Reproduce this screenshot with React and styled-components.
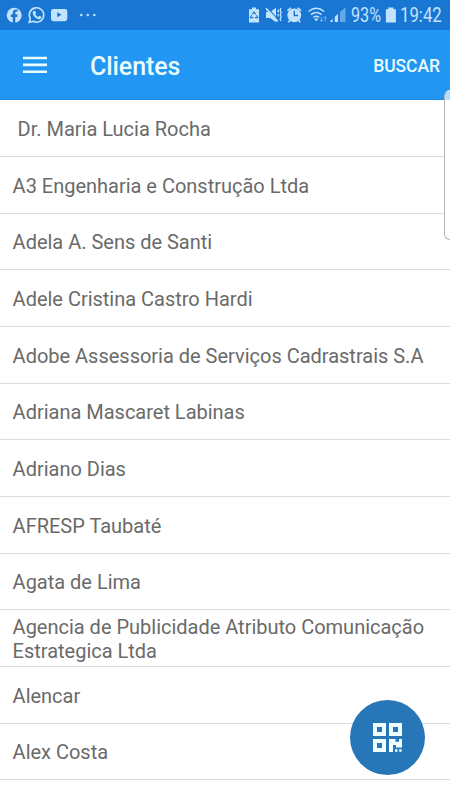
import React from 'react';
import styled, { createGlobalStyle } from 'styled-components';

const GlobalStyle = createGlobalStyle`
  * { box-sizing: border-box; }
  body { margin: 0; background: #fff; font-family: Roboto, "Liberation Sans", sans-serif; }
`;

const Screen = styled.div`
  position: relative;
  width: 450px;
  height: 800px;
  overflow: hidden;
  background: #fff;
`;

const StatusBar = styled.header`
  display: flex;
  align-items: center;
  justify-content: space-between;
  height: 30px;
  background: #1976d2;
  color: #c3e4ff;
`;

const StatusIcons = styled.svg`
  display: block;
  flex: none;
`;

const StatusGroup = styled.div`
  display: flex;
  align-items: center;
  height: 30px;
`;

const StatusText = styled.span`
  width: ${(p) => p.$width}px;
  font-size: 19.5px;
  line-height: 30px;
  padding-top: 1px;
  white-space: nowrap;
  transform: scaleX(${(p) => p.$scale});
  transform-origin: left center;
`;

const AppBar = styled.nav`
  display: flex;
  align-items: center;
  height: 70px;
  padding: 0 10px 0 23px;
  background: #2196f3;
  border-bottom: 1px solid #1d86dc;
  color: #e9fdff;
`;

const MenuButton = styled.button`
  display: flex;
  width: 24px;
  padding: 0;
  border: 0;
  background: none;
  color: inherit;
`;

const Title = styled.h1`
  flex: 1;
  margin: 4px 0 0 43px;
  font-size: 25px;
  font-weight: 500;
  line-height: 32px;
  letter-spacing: -0.08px;
`;

const SearchButton = styled.button`
  padding: 2px 0 0;
  border: 0;
  background: none;
  color: inherit;
  font: 500 17.5px/24px Roboto, sans-serif;
  letter-spacing: -0.05px;
`;

const List = styled.ul`
  margin: 0;
  padding: 0.25px 0 0;
  list-style: none;
`;

const Row = styled.li`
  display: flex;
  align-items: center;
  height: 56.68px;
  padding: 2px 12px 0 ${(p) => (p.$indented ? 17.6 : 12.6)}px;
  border-bottom: 1px solid #dcdcdc;
  color: #6a6a6a;
  font-size: 20px;
  line-height: 24px;
  letter-spacing: -0.01px;
`;

const EdgeHandle = styled.div`
  position: absolute;
  top: 90px;
  left: 444px;
  width: 12px;
  height: 150px;
  border: 1px solid #b5b5b5;
  border-top-color: transparent;
  border-radius: 7px;
  background: linear-gradient(#b5dcfa 9px, #fff 9px);
`;

const ScanButton = styled.button`
  position: absolute;
  top: 700px;
  left: 350px;
  display: grid;
  place-items: center;
  width: 75px;
  height: 75px;
  padding: 0;
  border: 0;
  border-radius: 50%;
  background: #2776b8;
  color: #f0fdff;
`;

const clients = [
  'Dr. Maria Lucia Rocha',
  'A3 Engenharia e Construção Ltda',
  'Adela A. Sens de Santi',
  'Adele Cristina Castro Hardi',
  'Adobe Assessoria de Serviços Cadrastrais S.A',
  'Adriana Mascaret Labinas',
  'Adriano Dias',
  'AFRESP Taubaté',
  'Agata de Lima',
  'Agencia de Publicidade Atributo Comunicação Estrategica Ltda',
  'Alencar',
  'Alex Costa',
];

function NotificationIcons() {
  return (
    <StatusIcons width="110" height="30" viewBox="0 0 110 30" fill="currentColor">
      <circle cx="14.2" cy="15.2" r="7.5" />
      <path d="M12.8 22.9v-6h-2v-2.5h2v-1.6c0-2.3 1.2-3.4 3.2-3.4h1.7v2.2h-1.2c-.9 0-1.2.5-1.2 1.3v1.5h2.3l-.4 2.5h-1.9v6z" fill="#1976d2" />
      <path d="M29.2 22.4l1.1-3.8a7.2 7.2 0 1 1 2.8 2.7z" fill="none" stroke="currentColor" strokeWidth="1.6" />
      <path d="M34.2 10.8l1.1.2.8 2-.8 1.2c.7 1.4 1.6 2.2 3 2.8l1.1-1.2 2 .9c.2 1.1-.8 2.5-2.2 2.5-3.2-.3-6.4-3.6-6.5-6.2 0-1 .6-1.9 1.5-2.2z" />
      <rect x="51" y="9" width="16.3" height="12.2" rx="2.4" />
      <path d="M57.2 12.3v5l4.3-2.5z" fill="#1976d2" />
      <circle cx="81.3" cy="15" r="1.3" />
      <circle cx="87.8" cy="15" r="1.3" />
      <circle cx="94.3" cy="15" r="1.3" />
    </StatusIcons>
  );
}

function SystemIcons() {
  return (
    <StatusIcons width="103" height="30" viewBox="248 0 103 30" fill="currentColor">
      <path d="M252 7.5h4v1.8h3v13.2h-10V9.3h3z" />
      <g fill="none" stroke="#1976d2" strokeWidth="1.15">
        <path d="M252.3 14.4l1.7-2.4 1.7 2.4M256.5 15.3l1.2 2.3h-2.8M253.3 17.6h-2.9l1.2-2.3" />
      </g>
      <path d="M266 12h4l6-4.2v14.4l-6-4.2h-4z" />
      <path d="M267.1 7.4l11.5 13" fill="none" stroke="#1976d2" strokeWidth="1.2" />
      <path d="M266 8.2l11.7 13.2" fill="none" stroke="currentColor" strokeWidth="1.7" />
      <path d="M278.2 9.5v3M278.2 14v2.5M280.8 8.2l-.6 2.2 1 2-1 2.2 1 2.2-1 2 .6 2.4" fill="none" stroke="currentColor" strokeWidth="1.3" />
      <circle cx="294.3" cy="15.3" r="6.9" />
      <path d="M287.5 10.8l3.4-2.9M301.1 10.8l-3.4-2.9M289.8 20.5l-1.5 1.8M298.8 20.5l1.5 1.8" fill="none" stroke="currentColor" strokeWidth="1.7" />
      <path d="M294.3 10.8v4.7h3.8" fill="none" stroke="#1976d2" strokeWidth="1.4" />
      <g fill="none" stroke="currentColor" strokeWidth="1.5">
        <path d="M308.5 11.5q7.8-6.5 15.6 0M311 14.6q5.3-4.3 10.6 0M313.4 17.5q2.9-2.3 5.8 0" />
      </g>
      <path d="M314.2 19l2.1 2.3 2.1-2.3q-2.1-1.5-4.2 0z" />
      <path d="M321.5 17v4.5m-1.6-1.6l1.6 1.6 1.6-1.6M325.2 21.5v-5m-1.6 1.6l1.6-1.6 1.6 1.6" fill="none" stroke="#67afea" strokeWidth="1" />
      <path d="M330.5 22v-1.3l2.2-1.8V22zM334.8 22v-5.2l3.2-2.7V22z" />
      <path d="M340 22V12l5.5-4.5V22z" fill="#64a8e5" />
    </StatusIcons>
  );
}

function BatteryIcon() {
  return (
    <StatusIcons width="15" height="30" viewBox="385 0 15 30" fill="currentColor">
      <path d="M388.3 7.5h5.2v1.8h2.4v13.3h-10V9.3h2.4z" />
    </StatusIcons>
  );
}

function MenuIcon() {
  return (
    <svg width="24" height="18" viewBox="0 0 24 18" fill="currentColor">
      <path d="M0 .7h24v2.6H0zM0 7.6h24v2.6H0zM0 14.4h24v2.6H0z" />
    </svg>
  );
}

function QrIcon() {
  return (
    <svg width="29" height="29" viewBox="0 0 29 29" fill="currentColor" fillRule="evenodd">
      <path d="M0 0h13v13H0zM4 4v5h5V4zM16 0h13v13H16zM20 4v5h5V4zM0 16h13v13H0zM4 20v5h5v-5z" />
      <path d="M16 16h6.5v2.8H26V16h3v8.5h-6V22h-3v7h-4zM22 26.3h2.5v2.5H22zM26.2 26.3h2.5v2.5h-2.5z" />
    </svg>
  );
}

export default function App() {
  return (
    <Screen>
      <GlobalStyle />
      <StatusBar>
        <NotificationIcons />
        <StatusGroup>
          <SystemIcons />
          <StatusText $width={34} $scale={0.83}>93%</StatusText>
          <BatteryIcon />
          <StatusText $width={50} $scale={0.86}>19:42</StatusText>
        </StatusGroup>
      </StatusBar>
      <AppBar>
        <MenuButton aria-label="Menu"><MenuIcon /></MenuButton>
        <Title>Clientes</Title>
        <SearchButton>BUSCAR</SearchButton>
      </AppBar>
      <List>
        {clients.map((name, index) => (
          <Row key={name} $indented={index === 0}>{name}</Row>
        ))}
      </List>
      <EdgeHandle />
      <ScanButton aria-label="QR"><QrIcon /></ScanButton>
    </Screen>
  );
}
